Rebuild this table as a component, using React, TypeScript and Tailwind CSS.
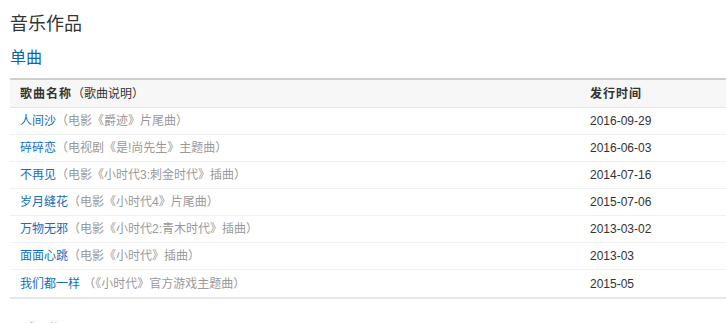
import React from "react";

const rows: [string, string, string][] = [
  ["人间沙", "（电影《爵迹》片尾曲）", "2016-09-29"],
  ["碎碎恋", "（电视剧《是!尚先生》主题曲）", "2016-06-03"],
  ["不再见", "（电影《小时代3:刺金时代》插曲）", "2014-07-16"],
  ["岁月缝花", "（电影《小时代4》片尾曲）", "2015-07-06"],
  ["万物无邪", "（电影《小时代2:青木时代》插曲）", "2013-03-02"],
  ["面面心跳", "（电影《小时代》插曲）", "2013-03"],
  ["我们都一样", " （《小时代》官方游戏主题曲）", "2015-05"],
];

export default function App() {
  return (
    <div
      className="w-[726px] h-[323px] overflow-hidden bg-white pl-[10px]"
      style={{ fontFamily: '"Liberation Sans", "Noto Sans CJK SC", sans-serif' }}
    >
      <div className="pt-[11px] text-[18px] leading-[26px] text-[#333]">音乐作品</div>
      <div className="mt-[10px] text-[16px] leading-[22px] text-[#0b64b0]">单曲</div>
      <div className="mt-[9px] w-[760px] border-t-2 border-[#cfcfcf] border-b-2 border-b-[#e6e6e6]">
        <div className="flex h-[28px] items-center bg-[#f7f7f7] border-b border-[#e6e6e6] text-[12px] text-[#333]">
          <div className="w-[570px] pl-[10px]">
            <span className="font-bold tracking-[1px]">歌曲名称</span>
            <span>（歌曲说明）</span>
          </div>
          <div className="pl-[10px] font-bold tracking-[1px]">发行时间</div>
        </div>
        {rows.map((r, i) => (
          <div
            key={i}
            className={`flex h-[27px] items-center text-[12px] ${i < rows.length - 1 ? "border-b border-[#f0f0f0]" : ""}`}
          >
            <div className="w-[570px] pl-[10px] whitespace-pre">
              <span className="text-[#136ec2]">{r[0]}</span>
              <span className="text-[#999]">{r[1]}</span>
            </div>
            <div className="pl-[10px] text-[#333]">{r[2]}</div>
          </div>
        ))}
      </div>
      <div className="mt-[20px] text-[18px] leading-[26px] text-[#333]">影视作品</div>
    </div>
  );
}
